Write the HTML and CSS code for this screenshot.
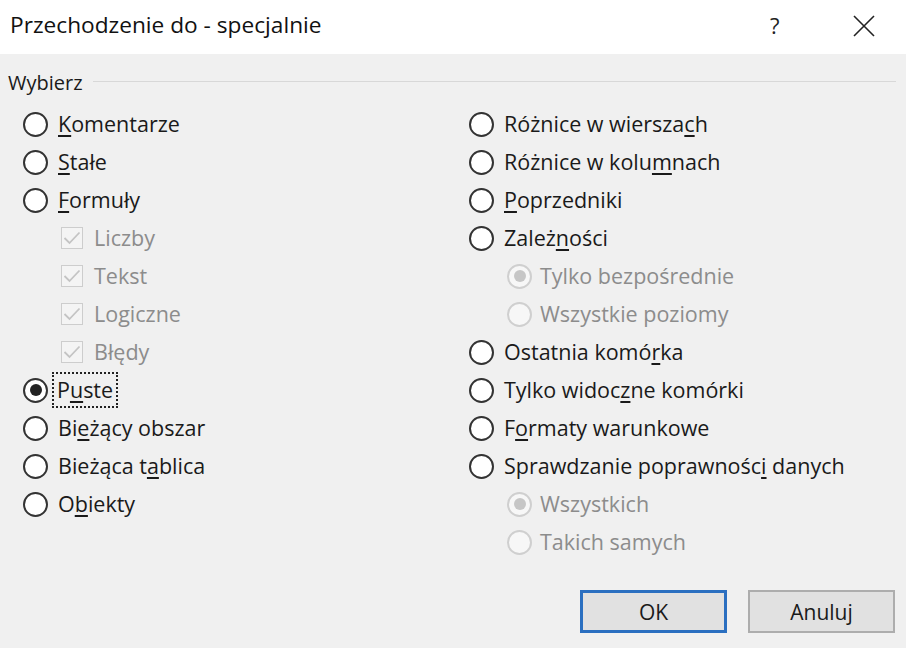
FILE: index.html
```html
<!DOCTYPE html>
<html lang="pl">
<head>
<meta charset="utf-8">
<title>Przechodzenie do - specjalnie</title>
<link rel="stylesheet" href="styles.css">
</head>
<body>
<div class="dialog">
  <div class="titlebar">
    <span class="title">Przechodzenie do - specjalnie</span>
    <span class="help">?</span>
    <span class="close"><svg width="22" height="22" viewBox="0 0 22 22"><path d="M1 1 L21 21 M21 1 L1 21" stroke="#222" stroke-width="1.6" fill="none"/></svg></span>
  </div>
  <div class="content">
    <div class="group-head"><span class="group-label">Wybierz</span><span class="group-line"></span></div>
    <div class="columns">
      <div class="col col-left">
        <div class="row"><span class="radio"></span><span class="label"><u>K</u>omentarze</span></div>
        <div class="row"><span class="radio"></span><span class="label"><u>S</u>tałe</span></div>
        <div class="row"><span class="radio"></span><span class="label"><u>F</u>ormuły</span></div>
        <div class="row sub"><span class="check"><svg width="18" height="14" viewBox="0 0 18 14"><path d="M1.5 7 L6.5 12 L16.5 1.5" stroke="#c4c4c4" stroke-width="1.8" fill="none"/></svg></span><span class="label dim">Liczby</span></div>
        <div class="row sub"><span class="check"><svg width="18" height="14" viewBox="0 0 18 14"><path d="M1.5 7 L6.5 12 L16.5 1.5" stroke="#c4c4c4" stroke-width="1.8" fill="none"/></svg></span><span class="label dim">Tekst</span></div>
        <div class="row sub"><span class="check"><svg width="18" height="14" viewBox="0 0 18 14"><path d="M1.5 7 L6.5 12 L16.5 1.5" stroke="#c4c4c4" stroke-width="1.8" fill="none"/></svg></span><span class="label dim">Logiczne</span></div>
        <div class="row sub"><span class="check"><svg width="18" height="14" viewBox="0 0 18 14"><path d="M1.5 7 L6.5 12 L16.5 1.5" stroke="#c4c4c4" stroke-width="1.8" fill="none"/></svg></span><span class="label dim">Błędy</span></div>
        <div class="row"><span class="radio checked"></span><span class="label focus">P<u>u</u>ste</span></div>
        <div class="row"><span class="radio"></span><span class="label">Bi<u>e</u>żący obszar</span></div>
        <div class="row"><span class="radio"></span><span class="label">Bieżąca t<u>a</u>blica</span></div>
        <div class="row"><span class="radio"></span><span class="label">O<u>b</u>iekty</span></div>
      </div>
      <div class="col col-right">
        <div class="row"><span class="radio"></span><span class="label">Różnice w wiersza<u>c</u>h</span></div>
        <div class="row"><span class="radio"></span><span class="label">Różnice w kolu<u>m</u>nach</span></div>
        <div class="row"><span class="radio"></span><span class="label"><u>P</u>oprzedniki</span></div>
        <div class="row"><span class="radio"></span><span class="label">Zależ<u>n</u>ości</span></div>
        <div class="row sub"><span class="radio disabled checked"></span><span class="label dim sublabel">Tylko bezpośrednie</span></div>
        <div class="row sub"><span class="radio disabled"></span><span class="label dim sublabel">Wszystkie poziomy</span></div>
        <div class="row"><span class="radio"></span><span class="label">Ostatnia komó<u>r</u>ka</span></div>
        <div class="row"><span class="radio"></span><span class="label">Tylko widoc<u>z</u>ne komórki</span></div>
        <div class="row"><span class="radio"></span><span class="label">F<u>o</u>rmaty warunkowe</span></div>
        <div class="row"><span class="radio"></span><span class="label">Sprawdzanie poprawnośc<u>i</u> danych</span></div>
        <div class="row sub"><span class="radio disabled checked"></span><span class="label dim sublabel">Wszystkich</span></div>
        <div class="row sub"><span class="radio disabled"></span><span class="label dim sublabel">Takich samych</span></div>
      </div>
    </div>
    <div class="buttons">
      <button class="btn default">OK</button>
      <button class="btn">Anuluj</button>
    </div>
  </div>
</div>
</body>
</html>
```
FILE: styles.css
```css
html, body {
  margin: 0;
  padding: 0;
}
body {
  width: 906px;
  height: 648px;
  background: #f0f0f0;
  font-family: "Open Sans", "Noto Sans", "DejaVu Sans", sans-serif;
  color: #1a1a1a;
  overflow: hidden;
}
.dialog {
  width: 906px;
  height: 648px;
  display: flex;
  flex-direction: column;
}
.titlebar {
  height: 54px;
  background: #ffffff;
  display: flex;
  align-items: center;
  padding-left: 10px;
  box-sizing: border-box;
}
.title {
  font-size: 21px;
  color: #111;
  flex: 1;
  margin-top: -4px;
  transform: scaleX(1.08);
  transform-origin: left center;
}
.help {
  font-size: 22px;
  color: #222;
  width: 14px;
  margin-right: 69px;
  margin-top: -4px;
}
.close {
  width: 22px;
  height: 22px;
  margin-right: 31px;
  margin-top: -2px;
  display: flex;
}
.content {
  flex: 1;
  display: flex;
  flex-direction: column;
}
.group-head {
  display: flex;
  align-items: center;
  height: 28px;
  margin-top: 14px;
  padding-left: 8px;
  padding-right: 10px;
}
.group-label {
  font-size: 20px;
  color: #1a1a1a;
}
.group-line {
  flex: 1;
  height: 1px;
  background: #d8d8d8;
  margin-left: 10px;
  margin-top: -2px;
}
.columns {
  display: flex;
  margin-top: 9px;
}
.col {
  display: flex;
  flex-direction: column;
}
.col-left {
  width: 469px;
  padding-left: 23px;
  box-sizing: border-box;
}
.row {
  height: 38px;
  display: flex;
  align-items: center;
}
.row.sub {
  padding-left: 38px;
}
.label {
  font-size: 21.5px;
  margin-left: 10px;
  white-space: nowrap;
  font-weight: 500;
  letter-spacing: 0;
  line-height: 28px;
}
.label u {
  text-decoration-thickness: 2px;
  text-underline-offset: 3px;
}
.label.dim {
  color: #8c8c8c;
  margin-left: 11px;
}
.label.dim.sublabel {
  margin-left: 8px;
}
.label.focus {
  outline: 2px dotted #222;
  outline-offset: 0;
  padding: 2px 3px;
  margin-left: 6px;
}
.radio {
  width: 21px;
  height: 21px;
  border: 2px solid #333;
  border-radius: 50%;
  background: #fff;
  box-sizing: content-box;
  position: relative;
  flex: none;
}
.radio.checked::after {
  content: "";
  position: absolute;
  left: 4.5px;
  top: 4.5px;
  width: 12px;
  height: 12px;
  border-radius: 50%;
  background: #222;
}
.radio.disabled {
  border-color: #cfcfcf;
  background: #f7f7f7;
}
.radio.disabled.checked::after {
  background: #c6c6c6;
}
.check {
  width: 20px;
  height: 20px;
  border: 1.5px solid #cdcdcd;
  background: #f4f4f4;
  display: flex;
  align-items: center;
  justify-content: center;
  flex: none;
}
.buttons {
  display: flex;
  justify-content: flex-end;
  gap: 21px;
  padding-right: 11px;
  margin-top: 29px;
}
.btn {
  width: 147px;
  height: 43px;
  background: #e1e1e1;
  border: 2px solid #adadad;
  font-family: inherit;
  font-size: 21px;
  font-weight: 500;
  color: #1a1a1a;
  padding: 0;
}
.btn.default {
  border: 3px solid #2b6fc0;
}
```
